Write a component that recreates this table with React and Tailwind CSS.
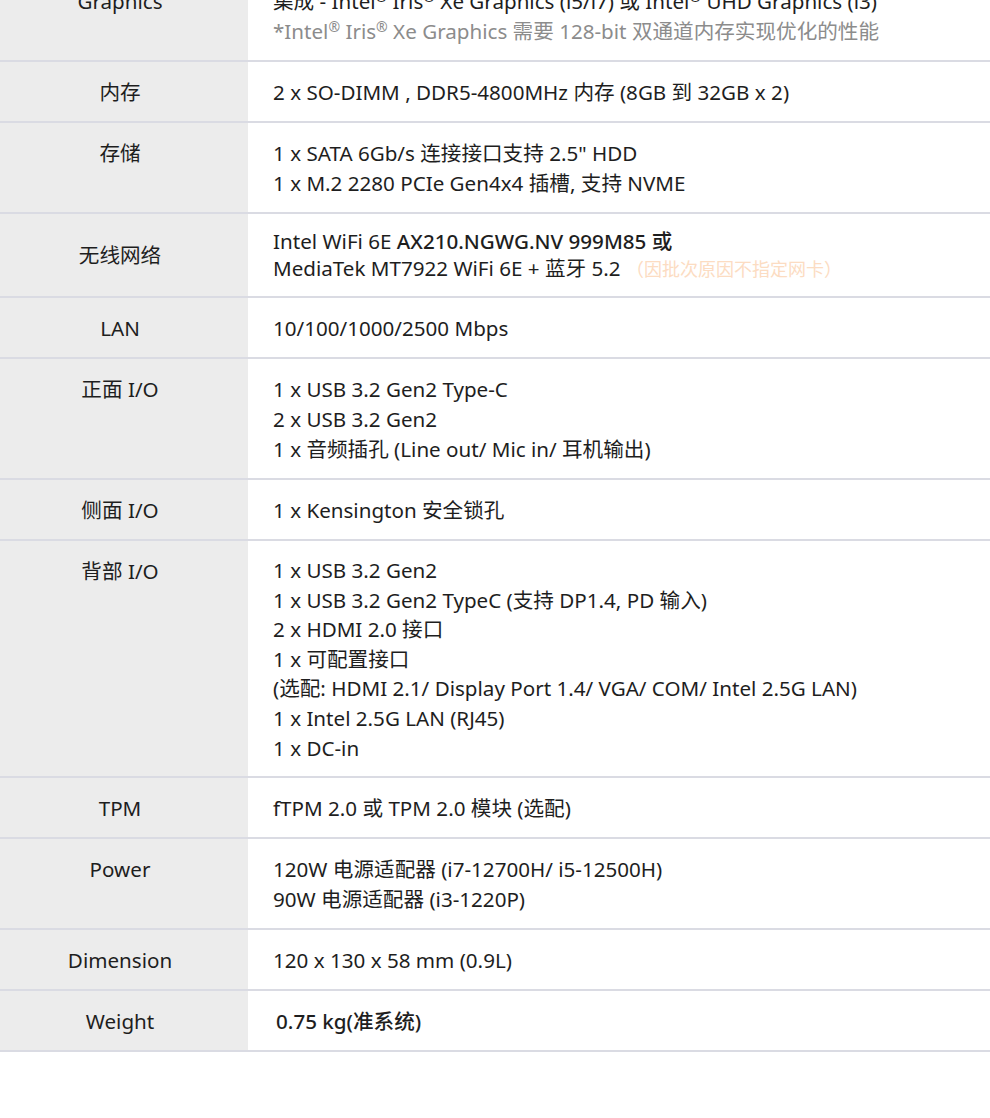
const rows = [
  {
    label: 'Graphics',
    lines: [
      <>集成 - Intel<sup className="text-[14px]">®</sup> Iris<sup className="text-[14px]">®</sup> Xe Graphics (i5/i7) 或 Intel<sup className="text-[14px]">®</sup> UHD Graphics (i3)</>,
      <span className="text-[#8c8c8c]">*Intel<sup className="text-[14px]">®</sup> Iris<sup className="text-[14px]">®</sup> Xe Graphics 需要 128-bit 双通道内存实现优化的性能</span>,
    ],
  },
  { label: '内存', lines: ['2 x SO-DIMM , DDR5-4800MHz 内存 (8GB 到 32GB x 2)'] },
  { label: '存储', lines: ['1 x SATA 6Gb/s 连接接口支持 2.5" HDD', '1 x M.2 2280 PCIe Gen4x4 插槽, 支持 NVME'] },
  {
    label: '无线网络',
    center: true,
    pad: 'pt-[14px] pb-[13px] leading-[27px]',
    lines: [
      <>Intel WiFi 6E <span className="font-medium">AX210.NGWG.NV 999M85 或</span></>,
      <>MediaTek MT7922 WiFi 6E + 蓝牙 5.2 <span className="text-[18px] text-[#fcdcc2]">（因批次原因不指定网卡）</span></>,
    ],
  },
  { label: 'LAN', lines: ['10/100/1000/2500 Mbps'] },
  { label: '正面 I/O', lines: ['1 x USB 3.2 Gen2 Type-C', '2 x USB 3.2 Gen2', '1 x 音频插孔 (Line out/ Mic in/ 耳机输出)'] },
  { label: '侧面 I/O', lines: ['1 x Kensington 安全锁孔'] },
  {
    label: '背部 I/O',
    pad: 'pt-[15px] pb-[13px] leading-[29.6px]',
    lines: [
      '1 x USB 3.2 Gen2',
      '1 x USB 3.2 Gen2 TypeC (支持 DP1.4, PD 输入)',
      '2 x HDMI 2.0 接口',
      '1 x 可配置接口',
      '(选配: HDMI 2.1/ Display Port 1.4/ VGA/ COM/ Intel 2.5G LAN)',
      '1 x Intel 2.5G LAN (RJ45)',
      '1 x DC-in',
    ],
  },
  { label: 'TPM', lines: ['fTPM 2.0 或 TPM 2.0 模块 (选配)'] },
  { label: 'Power', lines: ['120W 电源适配器 (i7-12700H/ i5-12500H)', '90W 电源适配器 (i3-1220P)'] },
  { label: 'Dimension', lines: ['120 x 130 x 58 mm (0.9L)'] },
  { label: 'Weight', lines: [<span className="pl-[3px] font-medium">0.75 kg(准系统)</span>] },
]

const Row = ({ row }) => {
  const pad = row.pad || 'pt-[15px] pb-[14px]'
  return (
    <div className="flex border-b-2 border-[#dadbe3]">
      <div
        className={`w-[248px] shrink-0 bg-[#ececec] pr-[8px] text-center ${row.center ? 'flex items-center justify-center' : 'pt-[15px]'}`}
      >
        {row.label}
      </div>
      <div className={`flex-1 pl-[25px] ${pad}`}>
        {row.lines.map((l, i) => (
          <div key={i}>{l}</div>
        ))}
      </div>
    </div>
  )
}

export default function App() {
  return (
    <div
      className="h-[1118px] w-[990px] overflow-hidden bg-white text-[20.6px] leading-[30px] text-[#1e1e1e]"
      style={{ fontFamily: '"Noto Sans", "Noto Sans CJK SC", sans-serif' }}
    >
      <div className="-mt-[29px]">
        {rows.map((r) => (
          <Row key={r.label} row={r} />
        ))}
      </div>
    </div>
  )
}
